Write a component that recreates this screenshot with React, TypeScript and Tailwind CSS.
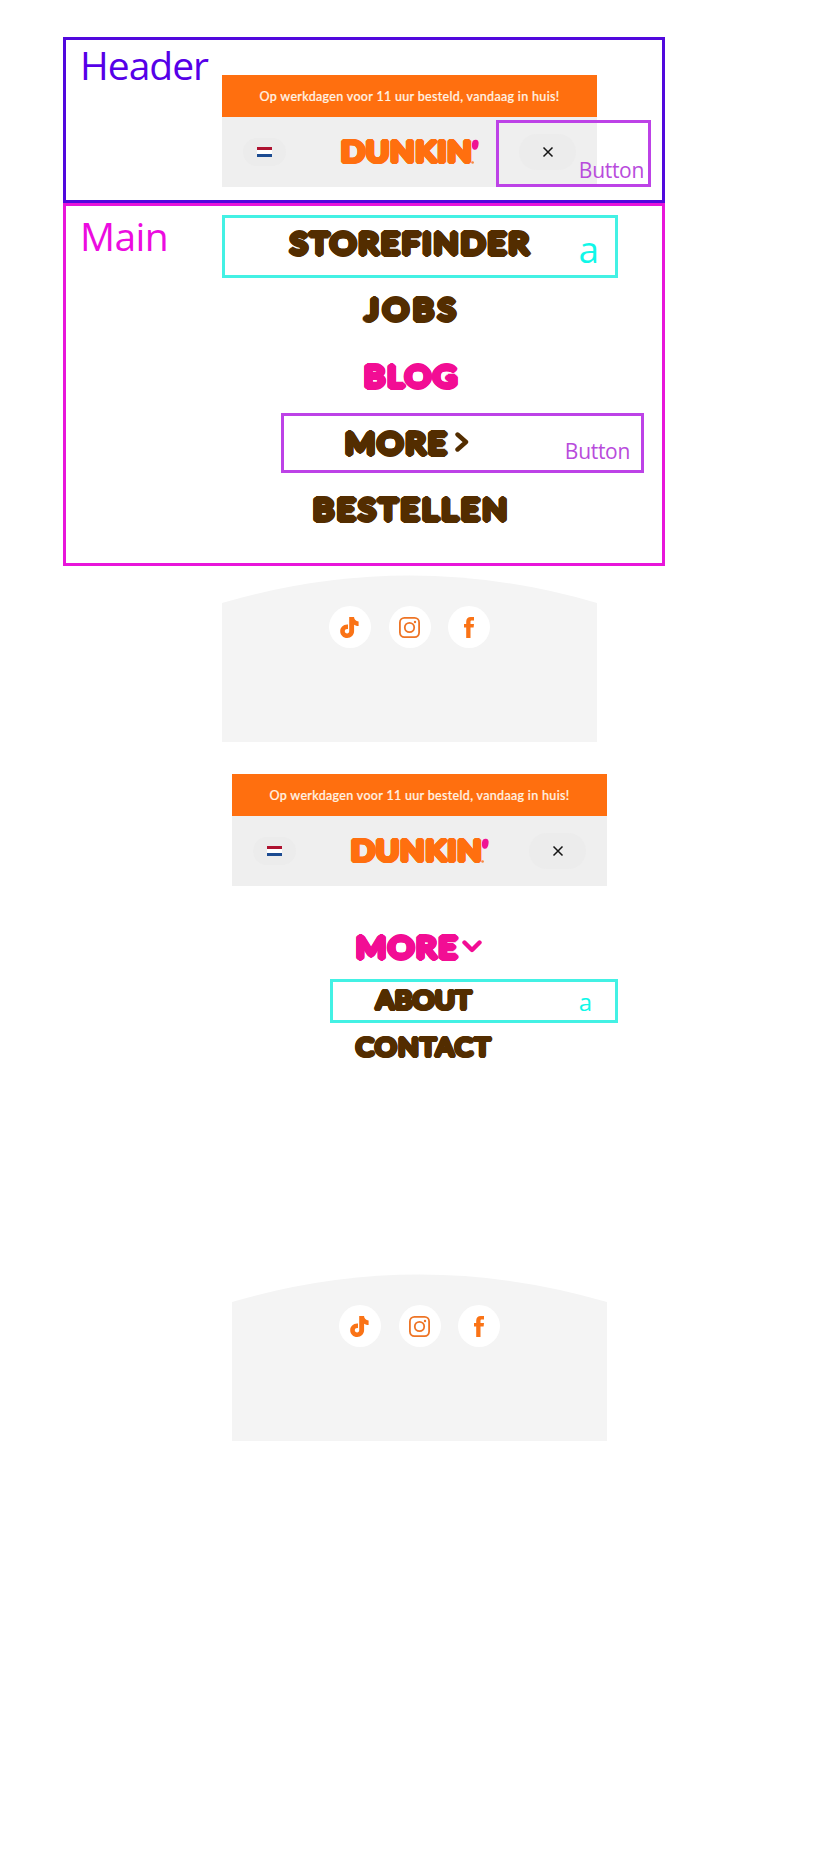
import { ReactNode } from "react";

const display =
  "block origin-left scale-x-110 whitespace-nowrap font-['Lato',sans-serif] leading-none [-webkit-text-stroke:0.035em_currentColor] [text-shadow:0.086em_0_0,0.074em_0.043em_0,0.043em_0.074em_0,0_0.086em_0,-0.043em_0.074em_0,-0.074em_0.043em_0,-0.086em_0_0,-0.074em_-0.043em_0,-0.043em_-0.074em_0,0_-0.086em_0,0.043em_-0.074em_0,0.074em_-0.043em_0]";

const note = "font-['Open_Sans','Noto_Sans',sans-serif] leading-none whitespace-nowrap";

function Word({ children, width, className }: { children: ReactNode; width: string; className: string }) {
  return (
    <span className={`block ${width}`}>
      <span className={`${display} ${className}`}>{children}</span>
    </span>
  );
}

function Logo() {
  return (
    <div className="relative flex h-[26px] w-[138px] items-center text-[#ff6f0f]">
      <Word width="w-[128px]" className="-mt-[2px] text-[28.5px] tracking-[1.1px]">DUNKIN</Word>
      <svg className="absolute right-0 top-0" width="8" height="26" viewBox="0 0 8 26">
        <path d="M1 4.5C1.3 1.6 3 .6 4.8.7 7 .8 7.9 2.4 7.6 5 7.3 8.700 6 10.800 3.900 10.800 1.400 10.800.600 8.200 1 4.500Z" fill="#ef1494" />
        <circle cx="1.600" cy="23.500" r="1.300" fill="#f58a42" />
      </svg>
    </div>
  );
}

function TopBar() {
  return (
    <div className="w-[375px]">
      <div className="flex h-[42px] items-center justify-center bg-[#ff6f0f] pt-[2px]">
        <p className="whitespace-nowrap font-['Lato',sans-serif] text-[12.5px] font-medium tracking-[0.32px] text-[#fff3e4] [-webkit-text-stroke:0.2px_#fff3e4]">
          Op werkdagen voor 11 uur besteld, vandaag in huis!
        </p>
      </div>
      <div className="flex h-[70px] items-center bg-[#efefef]">
        <button className="ml-[21px] flex h-[28px] w-[43px] items-center justify-center rounded-full bg-[#ececec]">
          <span className="flex h-[10px] w-[15px] flex-col justify-between bg-white">
            <span className="h-[3px] bg-[#ae1230]" />
            <span className="h-[3px] bg-[#1c4b91]" />
          </span>
        </button>
        <div className="ml-[55px]">
          <Logo />
        </div>
        <button className="ml-[40px] flex h-[36px] w-[57px] items-center justify-center rounded-full bg-[#ececec]">
          <svg width="12" height="12" viewBox="0 0 12 12" stroke="#151515" strokeWidth="1.500">
            <path d="M1.500 1.500l9 9M10.500 1.500l-9 9" />
          </svg>
        </button>
      </div>
    </div>
  );
}

function SocialFooter() {
  const circle = "flex h-[42px] w-[42px] items-center justify-center rounded-full bg-white text-[#fa7316]";
  return (
    <footer className="w-[375px]">
      <svg className="block" width="375" height="28" viewBox="0 0 375 28">
        <path d="M0 28Q187.500 -27 375 28Z" fill="#f4f4f4" />
      </svg>
      <div className="flex h-[139px] items-start justify-center gap-[17.500px] bg-[#f4f4f4] pt-[3px]">
        <a className={circle}>
          <svg className="-ml-[2px]" width="19" height="21" viewBox="0 0 19 21" fill="currentColor">
            <path d="M9.200 0h4.800c.3 2.600 1.800 4.200 4.600 4.500v4.600c-1.700 0-3.100-.4-4.500-1.300v6.300c0 4-3 6.900-6.900 6.900-3.900 0-7-3-7-6.800 0-4.100 3.500-7.200 7.800-6.700v4.700c-1.900-.4-3.200.6-3.200 2.100 0 1.300 1 2.200 2.300 2.200 1.400 0 2.100-.9 2.100-2.500Z" />
          </svg>
        </a>
        <a className={circle}>
          <svg width="21" height="21" viewBox="0 0 21 21" fill="none" stroke="#ee7425" strokeWidth="1.800">
            <rect x="0.900" y="0.900" width="19.200" height="19.200" rx="4.500" />
            <circle cx="10.500" cy="10.500" r="4.700" />
            <circle cx="16" cy="5" r="1.200" fill="#ee7425" stroke="none" />
          </svg>
        </a>
        <a className={circle}>
          <svg width="10" height="21" viewBox="0 0 10 21" fill="currentColor">
            <path d="M2.200 21V10.600H0V7h2.200V4.800C2.200 1.600 3.800 0 6.800 0H10v3.600H8C6.900 3.600 6.500 4 6.500 5v2H10l-.4 3.600H6.500V21Z" />
          </svg>
        </a>
      </div>
    </footer>
  );
}

export default function App() {
  return (
    <div className="flex h-[1857px] w-[819px] flex-col items-start overflow-hidden bg-white pt-[37px]">
      <header className="relative ml-[63px] flex h-[166px] w-[602px] border-3 border-[#5108dd]">
        <h1 className={`${note} w-[156px] shrink-0 pl-[14px] pt-[5px] text-[39px] tracking-[-1px] text-[#5600e8]`}>Header</h1>
        <div className="pt-[35px]">
          <TopBar />
        </div>
        <div className="absolute left-[430px] top-[80px] flex h-[67px] w-[155px] items-end justify-end border-3 border-[#bd42e7] pb-[3px] pr-[4px]">
          <span className={`${note} text-[21px] tracking-[-0.3px] text-[#b84bdc]`}>Button</span>
        </div>
      </header>

      <main className="relative ml-[63px] flex h-[363px] w-[602px] border-3 border-[#e815da] text-[#532d00]">
        <h2 className={`${note} w-[156px] shrink-0 pl-[14px] pt-[10px] text-[39px] tracking-[-0.6px] text-[#ec0ce0]`}>Main</h2>
        <nav className="flex w-[375px] flex-col items-center pt-[20px]">
          <a className="flex h-[33.300px] items-center"><Word width="w-[239px]" className="text-[29.5px] tracking-[2px]">STOREFINDER</Word></a>
          <a className="mt-[33.300px] flex h-[33.300px] items-center"><Word width="w-[89px]" className="text-[29.5px] tracking-[3.700px]">JOBS</Word></a>
          <a className="mt-[33.300px] flex h-[33.300px] items-center text-[#f20d94]"><Word width="w-[91px]" className="text-[29.5px] tracking-[2px]">BLOG</Word></a>
          <button className="-ml-[6px] mt-[33.300px] flex h-[33.300px] items-center gap-[11px] text-left">
            <Word width="w-[99px]" className="text-[29.5px] tracking-[1.900px]">MORE</Word>
            <svg className="-mt-[1px]" width="14" height="20" viewBox="0 0 14 20" fill="none" stroke="#532d00" strokeWidth="4.400" strokeLinecap="round" strokeLinejoin="round">
              <path d="M2.500 2.500l8.500 7.500L2.500 17.500" />
            </svg>
          </button>
          <a className="mt-[33.300px] flex h-[33.300px] items-center"><Word width="w-[193px]" className="text-[29.5px] tracking-[2.500px]">BESTELLEN</Word></a>
        </nav>
        <div className="absolute left-[156px] top-[9px] flex h-[63px] w-[396px] items-end justify-end border-3 border-[#43f1e4] pb-[8px] pr-[16px]">
          <span className="font-['Open_Sans',sans-serif] text-[37px] leading-none text-[#10f7e8]">a</span>
        </div>
        <div className="absolute left-[215px] top-[207px] flex h-[60px] w-[363px] items-end justify-end border-3 border-[#bd42e7] pb-[8px] pr-[11px]">
          <span className={`${note} text-[21px] tracking-[-0.3px] text-[#b84bdc]`}>Button</span>
        </div>
      </main>

      <div className="ml-[222px] mt-[9px]">
        <SocialFooter />
      </div>

      <section className="ml-[232px] mt-[32px] flex w-[386px] flex-col items-start">
        <TopBar />
        <button className="ml-[124px] mt-[44px] flex h-[34px] items-center gap-[7px] text-left text-[#f20d94]">
          <Word width="w-[99px]" className="text-[29.5px] tracking-[1.800px]">MORE</Word>
          <svg width="20" height="14" viewBox="0 0 20 14" fill="none" stroke="#f20d94" strokeWidth="4.400" strokeLinecap="round" strokeLinejoin="round">
            <path d="M2.500 2.500l7.500 7.500L17.500 2.500" />
          </svg>
        </button>
        <a className="ml-[98px] mt-[15px] flex h-[44px] w-[288px] items-center border-3 border-[#43f1e4] pl-[43px] text-[#532d00]">
          <Word width="w-[94px]" className="-mt-[2px] text-[24.300px] tracking-[0.700px]">ABOUT</Word>
          <span className={`${note} ml-auto mr-[23px] mt-[2px] text-[24px] text-[#10f7e8]`}>a</span>
        </a>
        <a className="ml-[124px] mt-[8px] flex h-[32px] items-center text-[#532d00]">
          <Word width="w-[134px]" className="text-[24.300px] tracking-[1.500px]">CONTACT</Word>
        </a>
      </section>

      <div className="ml-[232px] mt-[211px]">
        <SocialFooter />
      </div>
    </div>
  );
}
